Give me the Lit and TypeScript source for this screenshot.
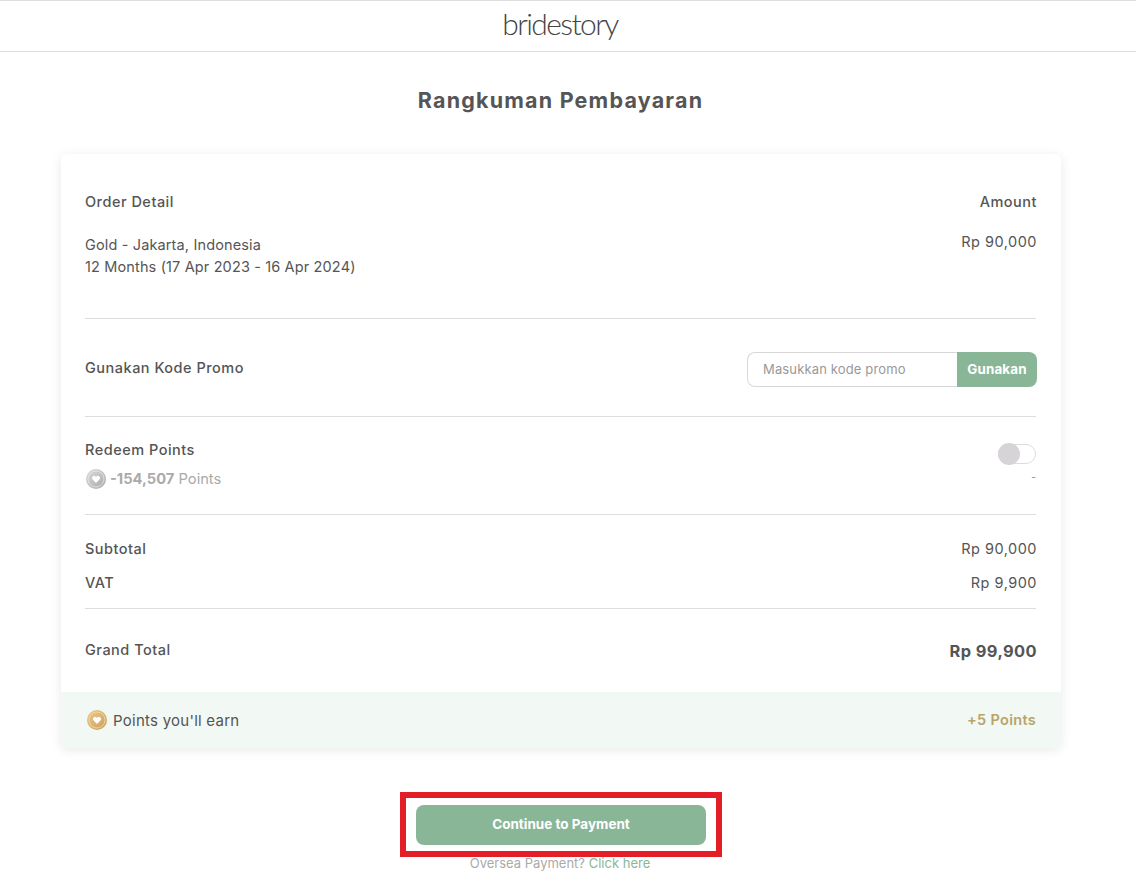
import { LitElement, html, css } from "lit";
import { customElement } from "lit/decorators.js";

const coin = (id: string, a: string, b: string, ring: string) => html`<svg class="coin" width="20" height="20" viewBox="0 0 20 20">
  <defs><linearGradient id=${id} x1="0" y1="0" x2="1" y2="1"><stop offset="0" stop-color=${a}></stop><stop offset="1" stop-color=${b}></stop></linearGradient></defs>
  <circle cx="10" cy="10" r="10" fill="url(#${id})"></circle>
  <circle cx="10" cy="10" r="8" fill="none" stroke=${ring} stroke-width=".7"></circle>
  <path d="M10 14 6.6 10.5a2.2 2.2 0 0 1 0-3 2.1 2.1 0 0 1 3 0l.4.4.4-.4a2.1 2.1 0 0 1 3 0 2.2 2.2 0 0 1 0 3Z" fill="#fff"></path>
</svg>`;

@customElement("app-root")
export class AppRoot extends LitElement {
  static styles = css`
    :host { display: block; height: 896px; overflow: hidden; background: #fff; color: #555; font-family: Inter, "Liberation Sans", sans-serif; font-size: 14.5px; letter-spacing: .14px; }
    * { box-sizing: border-box; }
    header { height: 52px; border-top: 1px solid #ddd; border-bottom: 1px solid #ddd; display: flex; justify-content: center; padding-right: 16px; }
    .logo { font-family: Lato, sans-serif; font-weight: 300; font-size: 30px; letter-spacing: -1.6px; line-height: 44px; color: #444; }
    h1 { margin: 0; padding: 36px 15px 0 0; height: 102px; font-size: 21.5px; line-height: 24px; font-weight: 700; letter-spacing: 1.2px; text-align: center; color: #555; }
    .card { width: 1000px; margin-left: 61px; border-radius: 6px; background: #fff; box-shadow: 0 2px 12px rgba(0,0,0,.09); overflow: hidden; }
    .row { display: flex; justify-content: space-between; }
    .sec { margin: 0 24px 0 24px; }
    .b { font-weight: 500; letter-spacing: .5px; }
    .num { letter-spacing: .5px; }
    .end { margin-right: -1px; }
    .order { height: 165px; padding-top: 38px; border-bottom: 1px solid #ddd; margin-right: 25px; line-height: 22px; }
    .order > .row:first-child { line-height: 20px; }
    .order .desc { margin-top: 22px; }
    .order .price { margin-top: 19px; text-align: right; }
    .promo { height: 98px; padding-top: 33px; border-bottom: 1px solid #ddd; margin-right: 25px; }
    .promo .lab { line-height: 20px; margin-top: 6px; }
    .form { display: flex; height: 35px; margin-right: -1px; }
    .field { width: 210px; border: 1px solid #d8d8d8; border-right: 0; border-radius: 8px 0 0 8px; padding-left: 15px; line-height: 33px; font-size: 13px; color: #999; }
    .apply { width: 80px; background: #8ab698; color: #fff; font-weight: 700; font-size: 13.4px; border-radius: 0 8px 8px 0; line-height: 35px; text-align: center; }
    .redeem { height: 98px; padding-top: 23px; border-bottom: 1px solid #ddd; margin-right: 25px; }
    .redeem .lab { line-height: 20px; }
    .pts { display: flex; align-items: center; gap: 4px; margin-top: 9px; font-size: 14.7px; line-height: 20px; color: #aaa; margin-left: 1px; letter-spacing: 0; }
    .pts strong { font-weight: 700; }
    .side { display: flex; flex-direction: column; align-items: flex-end; }
    .toggle { position: relative; width: 38px; height: 20px; border: 1px solid #ddd; border-radius: 10px; margin-top: 4px; }
    .toggle i { position: absolute; left: -1px; top: -2px; width: 22px; height: 22px; border-radius: 50%; background: #d6d4d6; }
    .dash { font-size: 10px; line-height: 12px; color: #888; margin-top: 7px; }
    .totals { height: 94px; padding-top: 24px; border-bottom: 1px solid #ddd; margin-right: 25px; }
    .totals .row { line-height: 20px; }
    .totals .row + .row { margin-top: 14px; }
    .grand { height: 83px; padding-top: 31px; margin-right: 25px; line-height: 20px; }
    .grand .amt { font-size: 16.4px; font-weight: 700; line-height: 24px; letter-spacing: .4px; margin-top: -1px; }
    .earn { height: 56px; background: #f2f8f4; padding: 0 25px 0 26px; display: flex; justify-content: space-between; align-items: center; }
    .earn .l { display: flex; align-items: center; gap: 6px; font-size: 15px; letter-spacing: .25px; }
    .earn .r { color: #b8a468; font-weight: 600; letter-spacing: .3px; margin-top: -2px; }
    .cta { width: 322px; height: 65px; margin: 44px 0 0 400px; border: 6px solid #e41e26; padding: 7px 10px 0 10px; }
    .btn { height: 40px; border-radius: 8px; background: #8ab698; color: #fff; font-weight: 700; font-size: 13.5px; line-height: 38px; text-align: center; letter-spacing: 0; }
    .over { text-align: center; font-size: 13px; line-height: 16px; margin-top: -2px; color: #aaa; padding-right: 16px; letter-spacing: 0; }
    .over span { color: #8ab698; }
  `;
  render() {
    return html`
      <header><div class="logo">bridestory</div></header>
      <h1>Rangkuman Pembayaran</h1>
      <section class="card">
        <div class="sec order">
          <div class="row b"><span>Order Detail</span><span class="end">Amount</span></div>
          <div class="row">
            <div class="desc">Gold - Jakarta, Indonesia<br />12 Months (17 Apr 2023 - 16 Apr 2024)</div>
            <div class="price num end">Rp 90,000</div>
          </div>
        </div>
        <div class="sec promo row">
          <div class="lab b">Gunakan Kode Promo</div>
          <div class="form"><div class="field">Masukkan kode promo</div><div class="apply">Gunakan</div></div>
        </div>
        <div class="sec redeem row">
          <div>
            <div class="lab b">Redeem Points</div>
            <div class="pts">${coin("s", "#dcdcdc", "#a8a8a8", "#eee")}<span><strong>-154,507</strong> Points</span></div>
          </div>
          <div class="side"><div class="toggle"><i></i></div><div class="dash">-</div></div>
        </div>
        <div class="sec totals">
          <div class="row"><span class="b">Subtotal</span><span class="num end">Rp 90,000</span></div>
          <div class="row"><span class="b">VAT</span><span class="num end">Rp 9,900</span></div>
        </div>
        <div class="sec grand row"><span class="b">Grand Total</span><span class="amt end">Rp 99,900</span></div>
        <div class="earn">
          <div class="l">${coin("g", "#ecc98a", "#c99f5c", "#f3dfb6")}<span>Points you'll earn</span></div>
          <div class="r">+5 Points</div>
        </div>
      </section>
      <div class="cta"><div class="btn">Continue to Payment</div></div>
      <div class="over">Oversea Payment? <span>Click here</span></div>
    `;
  }
}
